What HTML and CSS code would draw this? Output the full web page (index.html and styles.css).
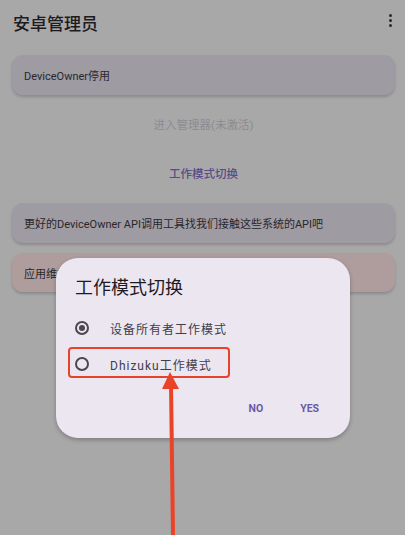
FILE: index.html
```html
<!DOCTYPE html>
<html lang="zh">
<head>
    <meta charset="UTF-8">
    <meta name="viewport" content="width=device-width, initial-scale=1.0">
    <title>安卓管理员</title>
    <link rel="stylesheet" href="styles.css">
</head>
<body>
    <div class="app">
        <header class="top-bar">
            <h1 class="title">安卓管理员</h1>
            <div class="menu-dots"><span></span><span></span><span></span></div>
        </header>

        <div class="card">DeviceOwner停用</div>
        <p class="link muted">进入管理器(未激活)</p>
        <p class="link accent">工作模式切换</p>
        <div class="card">更好的DeviceOwner API调用工具找我们接触这些系统的API吧</div>
        <div class="card warn">应用维护</div>
    </div>

    <div class="dialog">
        <h2 class="dialog-title">工作模式切换</h2>
        <div class="option">
            <span class="radio checked"></span>
            <span class="option-label">设备所有者工作模式</span>
        </div>
        <div class="option">
            <span class="radio"></span>
            <span class="option-label">Dhizuku工作模式</span>
        </div>
        <div class="dialog-actions">
            <button class="text-btn">NO</button>
            <button class="text-btn">YES</button>
        </div>
    </div>

    <!-- annotation on top of the screenshot -->
    <div class="highlight-box"></div>
    <svg class="arrow" width="405" height="535" viewBox="0 0 405 535">
        <line x1="171" y1="384" x2="173" y2="535" stroke="#ea4327" stroke-width="4"/>
        <polygon points="170,372 162,389 179,389" fill="#ea4327"/>
    </svg>
</body>
</html>
```

FILE: styles.css
```css
body {
    margin: 0;
    background-color: #a9a8a9;
    font-family: Roboto, "Noto Sans CJK SC", sans-serif;
    width: 405px;
    height: 535px;
    position: relative;
    overflow: hidden;
}

.app {
    padding: 0 10px 0 12px;
}

.top-bar {
    display: flex;
    align-items: center;
    justify-content: space-between;
    height: 44px;
    padding: 0 3px 0 1px;
}

.title {
    margin: 0;
    font-size: 17px;
    font-weight: 500;
    color: #1d1b1e;
}

.menu-dots {
    display: flex;
    flex-direction: column;
    gap: 2px;
    margin-top: -3px;
}

.menu-dots span {
    width: 3px;
    height: 3px;
    border-radius: 50%;
    background-color: #2a282c;
}

.card {
    background-color: #9f9ba3;
    border-radius: 11px;
    height: 40px;
    display: flex;
    align-items: center;
    padding-left: 12px;
    font-size: 11px;
    color: #29272b;
    box-shadow: 0 2px 3px rgba(0, 0, 0, 0.18);
    margin-top: 11px;
}

.card.warn {
    background-color: #af9c9c;
    height: 39px;
    margin-top: 10px;
}

.link {
    margin: 0;
    text-align: center;
    font-size: 11.5px;
}

.muted {
    color: #8d8b8f;
    margin-top: 21px;
}

.accent {
    color: #574c86;
    font-weight: 500;
    margin-top: 33px;
    margin-bottom: 22px;
}

.dialog {
    position: absolute;
    left: 56px;
    top: 258px;
    width: 294px;
    height: 180px;
    box-sizing: border-box;
    background-color: #ece6f1;
    border-radius: 22px;
    box-shadow: 0 2px 4px rgba(0, 0, 0, 0.25);
    padding: 15px 0 0 19px;
}

.dialog-title {
    margin: 0 0 11px;
    font-size: 18px;
    font-weight: 400;
    color: #1d1b1f;
}

.option {
    display: flex;
    align-items: center;
    height: 36px;
}

.radio {
    width: 10px;
    height: 10px;
    border: 2px solid #4b4651;
    border-radius: 50%;
    position: relative;
}

.radio.checked::after {
    content: '';
    position: absolute;
    left: 2px;
    top: 2px;
    width: 6px;
    height: 6px;
    border-radius: 50%;
    background-color: #4b4651;
}

.option-label {
    margin-left: 21px;
    font-size: 12px;
    letter-spacing: 1px;
    color: #423d48;
}

.dialog-actions {
    display: flex;
    justify-content: flex-end;
    gap: 37px;
    padding-right: 31px;
    margin-top: 20px;
}

.text-btn {
    border: none;
    background: none;
    padding: 0;
    font-family: Roboto, sans-serif;
    font-size: 10.5px;
    font-weight: 700;
    color: #6a5aa6;
}

.highlight-box {
    position: absolute;
    left: 68px;
    top: 347px;
    width: 158px;
    height: 27px;
    border: 2px solid #e8432a;
    border-radius: 4px;
}

.arrow {
    position: absolute;
    left: 0;
    top: 0;
}
```
